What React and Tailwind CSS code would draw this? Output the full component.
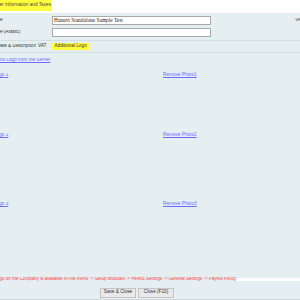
import React from "react";

const font = { fontFamily: '"Liberation Sans", Arial, sans-serif' };

const LogoRow = ({ n, className }) => (
  <div className={`flex h-[7px] items-center ${className}`}>
    <div className="w-[163px] overflow-hidden">
      <a href="#" className="-ml-[6px] block whitespace-nowrap text-[#6b6bff] underline">
        Logo {n}
      </a>
    </div>
    <a href="#" className="whitespace-nowrap text-[#6b6bff] underline">
      Remove Photo{n}
    </a>
  </div>
);

export default function App() {
  return (
    <div
      className="flex h-[300px] w-[300px] flex-col overflow-hidden bg-[#e5eff2] text-[4.7px] leading-none text-[#333]"
      style={font}
    >
      {/* Title bar */}
      <div className="flex h-[13px] shrink-0 bg-white">
        <div className="flex h-[11px] w-[52px] items-center justify-end overflow-hidden bg-[#ffff3c] pr-[1px]">
          <span className="whitespace-nowrap text-[#444]">Other Information and Taxes</span>
        </div>
      </div>

      {/* Name fields */}
      <div className="mt-[3px] flex h-[9px] items-center">
        <div className="w-[52px] overflow-hidden">
          <span className="-ml-[10px] block whitespace-nowrap">Name</span>
        </div>
        <div
          className="flex h-[9px] w-[159px] items-center border border-[#a9a9a9] bg-white pl-[1px] text-[5.4px] text-[#222]"
          style={{ fontFamily: '"Liberation Serif", serif' }}
        >
          Hanuvi Standalone Sample Test
        </div>
        <div className="ml-auto w-[5px] overflow-hidden text-[#555]">
          <span className="whitespace-nowrap">Version</span>
        </div>
      </div>
      <div className="mt-[3px] flex h-[9px] items-center">
        <div className="w-[52px] overflow-hidden">
          <span className="-ml-[10px] block whitespace-nowrap">Name (Arabic)</span>
        </div>
        <div className="h-[9px] w-[159px] border border-[#a9a9a9] bg-white" />
      </div>

      {/* Tabs */}
      <div className="mt-[3px] h-px bg-[#d3dfe3]" />
      <div className="flex h-[11px] items-center">
        <div className="flex w-[36px] justify-end overflow-hidden">
          <span className="whitespace-nowrap">Date &amp; Description</span>
        </div>
        <span className="ml-[2px]">VAT</span>
        <div className="ml-[6px] flex h-[7px] items-center bg-[#ffff3c] px-[2px] text-[#333]">
          Additional Logo
        </div>
      </div>
      <div className="h-px bg-[#d3dfe3]" />

      {/* Logos */}
      <div className="mt-[5px] w-[52px] overflow-hidden">
        <a href="#" className="-ml-[8px] block whitespace-nowrap text-[#6b6bff] underline">
          Select Logo from the Server
        </a>
      </div>
      <LogoRow n={1} className="mt-[9px]" />
      <LogoRow n={2} className="mt-[53px]" />
      <LogoRow n={3} className="mt-[62px]" />

      {/* Footer note */}
      <div className="mt-[68px] flex h-[7px] items-center">
        <div className="flex w-[236px] justify-end overflow-hidden">
          <span className="whitespace-nowrap text-[4.5px] text-[#ff3b3b]">
            Payroll Settings for the Company is available in File menu -&gt; Setup Modules -&gt; HRMS
            Settings -&gt; General Settings -&gt; Payroll Policy
          </span>
        </div>
        <div className="ml-[1px] h-[3px] flex-1 bg-white" />
      </div>

      {/* Buttons */}
      <div className="mt-[5px] flex gap-[2px] pl-[100px]">
        <button className="flex h-[10px] w-[36px] items-center justify-center border border-[#c4c4c4] bg-[#e9e9e9] text-[#333]">
          Save &amp; Close
        </button>
        <button className="flex h-[10px] w-[36px] items-center justify-center border border-[#c4c4c4] bg-[#e9e9e9] text-[#333]">
          Close (F10)
        </button>
      </div>
      <div className="mt-[1px] h-px bg-[#cfd8db]" />
    </div>
  );
}
